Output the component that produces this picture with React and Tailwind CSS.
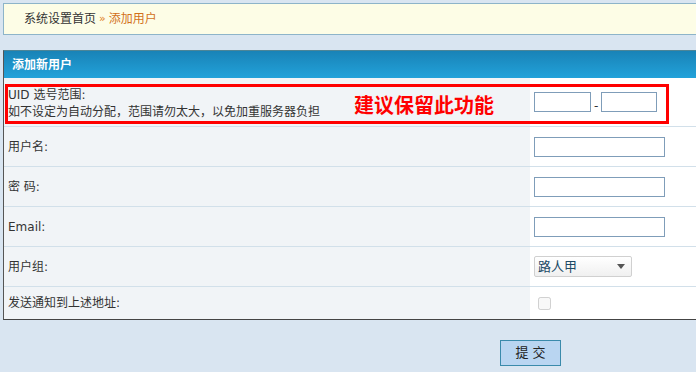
const FONT = "font-['DejaVu_Sans','Noto_Sans_CJK_SC',sans-serif]";

function Row({ label, children, last }) {
  return (
    <div
      className={`grid grid-cols-[526px_1fr] ${last ? "h-[32px]" : "h-[40px] border-b border-[#d2e0ea]"}`}
    >
      <div className="flex items-center bg-[#f1f4f7] pl-1 text-[12px] text-[#333]">{label}</div>
      <div className="flex items-center bg-white pl-1">{children}</div>
    </div>
  );
}

function TextInput({ w = "w-[131px]" }) {
  return <input type="text" className={`${w} h-[20px] border border-[#7f9db9] bg-white`} />;
}

export default function App() {
  return (
    <div className={`h-[372px] w-[696px] overflow-hidden bg-[#d9e5f1] pt-[3px] pl-[3px] ${FONT}`}>
      {/* breadcrumb */}
      <div className="flex h-[32px] w-[700px] items-center border border-[#8db4c9] bg-[#fdfde6] pl-[20px] text-[12px]">
        <span className="text-[#333]">系统设置首页</span>
        <span className="mx-[3px] text-[11px] text-[#e0801c]">»</span>
        <span className="text-[#d2701a]">添加用户</span>
      </div>

      {/* form table */}
      <div className="mt-[15px] w-[700px] border-t border-l border-b border-t-[#4d8597] border-l-[#555] border-b-[#444]">
        <div className="flex h-[27px] items-center bg-gradient-to-b from-[#1983b7] to-[#22a2da] pl-[8px] text-[12px] font-bold text-white">
          添加新用户
        </div>

        <div className="relative grid h-[49px] grid-cols-[526px_1fr] border-b border-[#d2e0ea]">
          <div className="flex flex-col gap-[3px] bg-[#f1f4f7] pl-1 pt-[10px] text-[12px] leading-[14px] text-[#333]">
            <span>UID 选号范围:</span>
            <span>如不设定为自动分配，范围请勿太大，以免加重服务器负担</span>
          </div>
          <div className="flex items-center gap-[3px] bg-white pl-1 text-[12px] text-[#333]">
            <TextInput w="w-[57px]" />
            <span className="mt-[8px]">-</span>
            <TextInput w="w-[56px]" />
          </div>
          {/* annotation overlay */}
          <div className="absolute left-[1px] top-[6px] h-[40px] w-[664px] border-[3px] border-[#ff0000]" />
          <div className="absolute left-[350px] top-[15px] text-[20px] font-bold leading-[24px] text-[#ff0000] font-['Noto_Sans_CJK_SC',sans-serif]">
            建议保留此功能
          </div>
        </div>

        <Row label="用户名:">
          <TextInput />
        </Row>
        <Row label="密 码:">
          <TextInput />
        </Row>
        <Row label="Email:">
          <TextInput />
        </Row>
        <Row label="用户组:">
          <div className="flex h-[21px] w-[98px] items-center justify-between rounded-[2px] border border-[#d0d0d0] bg-gradient-to-b from-white to-[#f0f0f0] pl-[3px] pr-[6px] text-[13px] text-[#1d4a66]">
            <span>路人甲</span>
            <span className="h-0 w-0 border-x-[4px] border-t-[5px] border-x-transparent border-t-[#555]" />
          </div>
        </Row>
        <Row label="发送通知到上述地址:" last>
          <input type="checkbox" disabled className="ml-[4px] h-[13px] w-[13px]" />
        </Row>
      </div>

      {/* submit */}
      <div className="mt-[20px] pl-[497px]">
        <button
          type="button"
          className="h-[26px] w-[61px] border border-[#3a8aab] bg-[#b9d5f1] text-[13px] text-[#222]"
        >
          提 交
        </button>
      </div>
    </div>
  );
}
